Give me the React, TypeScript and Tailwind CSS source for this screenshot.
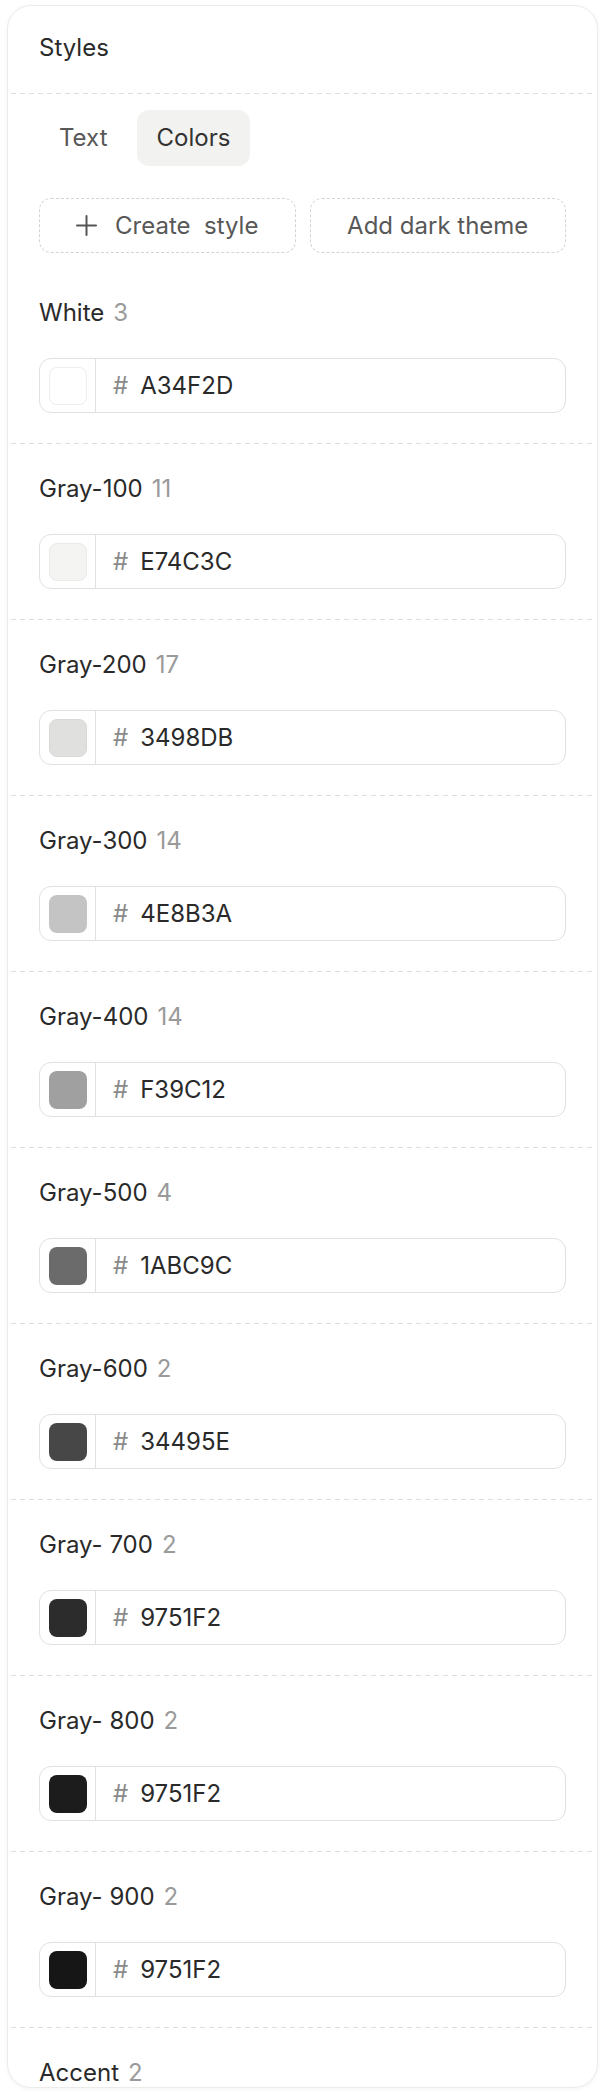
interface ColorStyle {
  name: string;
  count: number;
  hex: string;
  swatch: string;
}

const colors: ColorStyle[] = [
  { name: "White", count: 3, hex: "A34F2D", swatch: "bg-white border border-[#ededeb]" },
  { name: "Gray-100", count: 11, hex: "E74C3C", swatch: "bg-[#f4f4f3] border border-[#eaeae8]" },
  { name: "Gray-200", count: 17, hex: "3498DB", swatch: "bg-[#e0e0df] border border-[#d8d8d6]" },
  { name: "Gray-300", count: 14, hex: "4E8B3A", swatch: "bg-[#c4c4c4]" },
  { name: "Gray-400", count: 14, hex: "F39C12", swatch: "bg-[#a0a0a0]" },
  { name: "Gray-500", count: 4, hex: "1ABC9C", swatch: "bg-[#6b6b6b]" },
  { name: "Gray-600", count: 2, hex: "34495E", swatch: "bg-[#474747]" },
  { name: "Gray- 700", count: 2, hex: "9751F2", swatch: "bg-[#2c2c2c]" },
  { name: "Gray- 800", count: 2, hex: "9751F2", swatch: "bg-[#1c1c1c]" },
  { name: "Gray- 900", count: 2, hex: "9751F2", swatch: "bg-[#161616]" },
];

function Divider() {
  return (
    <div className="mx-[3px] h-px bg-[linear-gradient(to_right,#dcdcda_55%,transparent_55%)] bg-[length:9px_1px] bg-repeat-x" />
  );
}

function ColorRow({ color }: { color: ColorStyle }) {
  return (
    <>
      <div className="px-[31px] pb-[30px] pt-[29px]">
        <div className="flex h-[32px] items-center leading-[32px]">
          <span className="text-[#2a2a2a]">{color.name}</span>
          <span className="ml-[9px] text-[#9a9a9a]">{color.count}</span>
        </div>
        <div className="mt-[29px] flex h-[55px] items-stretch rounded-[12px] border-[1.5px] border-[#e1e1de] bg-white">
          <div className="flex w-[56px] shrink-0 items-center justify-center border-r-[1.5px] border-[#e1e1de]">
            <div className={`h-[38px] w-[38px] rounded-[8px] ${color.swatch}`} />
          </div>
          <div className="flex items-center pl-[17px]">
            <span className="text-[#8a8a8a]">#</span>
            <span className="ml-[12px] text-[#2a2a2a]">{color.hex}</span>
          </div>
        </div>
      </div>
      <Divider />
    </>
  );
}

export default function App() {
  return (
    <div className="min-h-[2098px] bg-white pl-[7px] pr-[6px] pt-[5px] font-['Inter',sans-serif] text-[24px]">
      <div className="h-[2083px] overflow-hidden rounded-[24px] border border-[#ebebe9] bg-white shadow-[0_1px_4px_rgba(0,0,0,0.05)]">
        {/* Header */}
        <div className="px-[31px] pb-[29px] pt-[26px] leading-[32px] text-[#2a2a2a]">
          Styles
        </div>
        <Divider />

        {/* Tabs + actions */}
        <div className="px-[31px] pb-[15px] pt-[16px]">
          <div className="flex gap-[9px]">
            <button className="h-[56px] rounded-[12px] px-[20px] text-[#585858]">
              Text
            </button>
            <button className="h-[56px] rounded-[12px] bg-[#f2f2f0] px-[20px] text-[#333333]">
              Colors
            </button>
          </div>
          <div className="mt-[32px] grid grid-cols-2 gap-[14px]">
            <button className="flex h-[55px] items-center justify-center gap-[18px] rounded-[12px] border-[1.5px] border-dashed border-[#d4d4d2] text-[#585858]">
              <svg width="21" height="21" viewBox="0 0 21 21" fill="none" stroke="#555555" strokeWidth="2" strokeLinecap="round">
                <path d="M10.5 1v19M1 10.5h19" />
              </svg>
              <span className="whitespace-pre">Create  style</span>
            </button>
            <button className="flex h-[55px] items-center justify-center rounded-[12px] border-[1.5px] border-dashed border-[#d4d4d2] text-[#585858]">
              Add dark theme
            </button>
          </div>
        </div>

        {/* Color styles */}
        {colors.map((color) => (
          <ColorRow key={color.name} color={color} />
        ))}

        <div className="px-[31px] pt-[29px]">
          <div className="flex h-[32px] items-center leading-[32px]">
            <span className="text-[#2a2a2a]">Accent</span>
            <span className="ml-[9px] text-[#9a9a9a]">2</span>
          </div>
        </div>
      </div>
    </div>
  );
}
